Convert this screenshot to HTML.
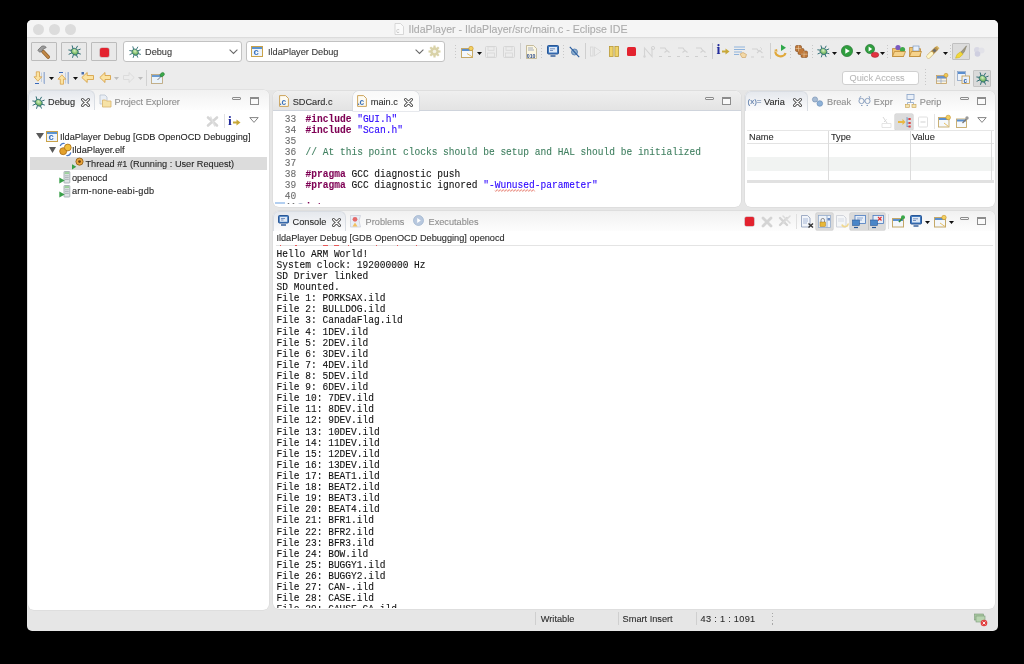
<!DOCTYPE html>
<html><head><meta charset="utf-8">
<style>
*{box-sizing:border-box;margin:0;padding:0}
html,body{width:1024px;height:664px;overflow:hidden;background:#000}
body{position:relative;font-family:"Liberation Sans",sans-serif;font-size:9.2px;color:#222}
#root{position:absolute;left:0;top:0;width:1024px;height:664px;will-change:transform}
.a{position:absolute}
svg{overflow:visible}
</style></head><body><div id="root">

<div class="a" style="left:27px;top:20px;width:970.5px;height:611px;background:#e6e6e6;border-radius:5px"></div>
<div class="a" style="left:27px;top:20px;width:970.5px;height:17px;background:#f5f5f5;border-radius:5px 5px 0 0"></div>
<div class="a" style="left:27px;top:37px;width:970.5px;height:53px;background:linear-gradient(#e3e3e3 0px,#e9e9e9 2px,#ececec 4px,#ececec)"></div>
<div class="a" style="left:27px;top:36.5px;width:970.5px;height:1px;background:#dcdcdc"></div>
<div class="a" style="left:32.5px;top:23.5px;width:11px;height:11px;border-radius:50%;background:#dcdcdc"></div>
<div class="a" style="left:48.5px;top:23.5px;width:11px;height:11px;border-radius:50%;background:#dcdcdc"></div>
<div class="a" style="left:64.5px;top:23.5px;width:11px;height:11px;border-radius:50%;background:#dcdcdc"></div>
<svg class="a" style="left:394px;top:23px" width="10" height="12" viewBox="0 0 10 12"><path d="M1 0.5h5.5l3 3v8H1z" fill="#fbfbfb" stroke="#cfcfcf" stroke-width="0.8"/><text x="2.2" y="9.5" font-size="6.5" font-family="Liberation Sans" fill="#bdbdbd">c</text></svg>
<div class="a" style="left:408.5px;top:24.33px;font-family:'Liberation Sans';font-size:10.6px;line-height:10.6px;color:#ababab;white-space:pre;-webkit-text-stroke:0.1px #ababab;">IldaPlayer - IldaPlayer/src/main.c - Eclipse IDE</div>
<div class="a" style="left:31px;top:42px;width:25.5px;height:18.6px;border:1px solid #bcbcbc;background:#e9e9e9;border-radius:1px"></div>
<div class="a" style="left:61px;top:42px;width:25.5px;height:18.6px;border:1px solid #bcbcbc;background:#e9e9e9;border-radius:1px"></div>
<div class="a" style="left:91px;top:42px;width:25.5px;height:18.6px;border:1px solid #bcbcbc;background:#e9e9e9;border-radius:1px"></div>
<svg class="a" style="left:36.5px;top:44.5px" width="14" height="14" viewBox="0 0 14 14"><path d="M6 6.5L11.2 12" stroke="#8a5a24" stroke-width="3.6" stroke-linecap="round"/><path d="M6 6.5L11.2 12" stroke="#c08848" stroke-width="2.4" stroke-linecap="round"/><path d="M0.8 5.2L4.6 1.3Q6 0.6 7.6 1.2L9.2 2.2L8.4 3.2L6.8 3.4L4.6 6.6L2.6 7.2z" fill="#9c9c9c" stroke="#636363" stroke-width="0.7"/></svg>
<svg class="a" style="left:67.5px;top:44.5px" width="13" height="13" viewBox="0 0 13 13"><defs><radialGradient id="bg67" cx="0.4" cy="0.4" r="0.7"><stop offset="0" stop-color="#d8f0c0"/><stop offset="0.6" stop-color="#7dbb68"/><stop offset="1" stop-color="#3f8a58"/></radialGradient></defs><g stroke="#2d6b72" stroke-width="1" stroke-linecap="round" fill="none"><path d="M5 3.6L4.2 0.8M8.2 3.4L9.4 1.2M3.6 5.4L0.8 5.0M3.6 8.0L1.0 9.2M9.6 5.2L12.2 4.2M9.8 8.2L12.4 9.0M5.4 9.8L4.6 12.4M8.4 9.8L9.4 12.2"/></g><ellipse cx="6.7" cy="6.7" rx="3.7" ry="3.1" transform="rotate(40 6.7 6.7)" fill="url(#bg67)" stroke="#2f6f78" stroke-width="0.8"/></svg>
<div class="a" style="left:100px;top:47.6px;width:9px;height:9px;background:#e3232f;border-radius:2px;box-shadow:0 0 0 0.6px #c7a0a4"></div>
<div class="a" style="left:123px;top:41px;width:118.5px;height:20.5px;border:1px solid #c2c2c2;background:#fff;border-radius:3px"></div>
<svg class="a" style="left:128.5px;top:45.5px" width="12" height="12" viewBox="0 0 13 13"><defs><radialGradient id="bg128" cx="0.4" cy="0.4" r="0.7"><stop offset="0" stop-color="#d8f0c0"/><stop offset="0.6" stop-color="#7dbb68"/><stop offset="1" stop-color="#3f8a58"/></radialGradient></defs><g stroke="#2d6b72" stroke-width="1" stroke-linecap="round" fill="none"><path d="M5 3.6L4.2 0.8M8.2 3.4L9.4 1.2M3.6 5.4L0.8 5.0M3.6 8.0L1.0 9.2M9.6 5.2L12.2 4.2M9.8 8.2L12.4 9.0M5.4 9.8L4.6 12.4M8.4 9.8L9.4 12.2"/></g><ellipse cx="6.7" cy="6.7" rx="3.7" ry="3.1" transform="rotate(40 6.7 6.7)" fill="url(#bg128)" stroke="#2f6f78" stroke-width="0.8"/></svg>
<div class="a" style="left:145px;top:48.31px;font-family:'Liberation Sans';font-size:9.2px;line-height:9.2px;color:#3a3a3a;white-space:pre;-webkit-text-stroke:0.1px #3a3a3a;">Debug</div>
<svg class="a" style="left:229px;top:49px" width="9" height="5" viewBox="0 0 9 5"><path d="M0.6 0.6L4.5 4.4L8.4 0.6" fill="none" stroke="#6a6a6a" stroke-width="1.1"/></svg>
<div class="a" style="left:246px;top:41px;width:198.5px;height:20.5px;border:1px solid #c2c2c2;background:#fff;border-radius:3px"></div>
<svg class="a" style="left:250.5px;top:46px" width="12" height="11" viewBox="0 0 12 11"><rect x="0.5" y="0.5" width="11" height="10" fill="#eef4fb" stroke="#c9a24a"/><rect x="1" y="1" width="10" height="2" fill="#5b93d0"/><text x="2.6" y="9.4" font-size="9.5" font-family="Liberation Sans" font-weight="bold" fill="#3a74c0">c</text></svg>
<div class="a" style="left:268px;top:48.31px;font-family:'Liberation Sans';font-size:9.2px;line-height:9.2px;color:#3a3a3a;white-space:pre;-webkit-text-stroke:0.1px #3a3a3a;">IldaPlayer Debug</div>
<svg class="a" style="left:415px;top:49px" width="9" height="5" viewBox="0 0 9 5"><path d="M0.6 0.6L4.5 4.4L8.4 0.6" fill="none" stroke="#6a6a6a" stroke-width="1.1"/></svg>
<svg class="a" style="left:428px;top:45px" width="13" height="13" viewBox="0 0 13 13"><g fill="#d9d2a8"><circle cx="6.5" cy="6.5" r="4.3"/><g stroke="#d9d2a8" stroke-width="2.2"><line x1="6.5" y1="0.5" x2="6.5" y2="12.5"/><line x1="0.5" y1="6.5" x2="12.5" y2="6.5"/><line x1="2.3" y1="2.3" x2="10.7" y2="10.7"/><line x1="10.7" y1="2.3" x2="2.3" y2="10.7"/></g></g><circle cx="6.5" cy="6.5" r="1.8" fill="#f4f2e6"/></svg>
<div class="a" style="left:455px;top:45px;width:1px;height:14px;background:repeating-linear-gradient(#c8c8c8 0 1px,transparent 1px 3px)"></div>
<svg class="a" style="left:460.5px;top:45.5px" width="13" height="12" viewBox="0 0 13 12"><rect x="0.5" y="2.5" width="11" height="9" fill="#f4f7fb" stroke="#c4a868"/><rect x="1" y="3" width="10" height="2" fill="#5b8fcf"/><path d="M6 7.5L11.5 11" stroke="#e7c063" stroke-width="1"/><circle cx="10" cy="2.5" r="2.2" fill="#f2d060" stroke="#c6902a" stroke-width="0.6"/></svg>
<svg class="a" style="left:476.5px;top:52px" width="5" height="3" viewBox="0 0 5 3"><path d="M0 0h5L2.5 3z" fill="#111"/></svg>
<svg class="a" style="left:485px;top:45.5px" width="12" height="12" viewBox="0 0 12 12"><rect x="0.5" y="0.5" width="11" height="11" rx="1" fill="none" stroke="#d6d6d6"/><rect x="3" y="0.8" width="6" height="3.5" fill="none" stroke="#d6d6d6" stroke-width="0.8"/><rect x="2.5" y="7" width="7" height="4" fill="none" stroke="#d6d6d6" stroke-width="0.8"/></svg>
<svg class="a" style="left:503px;top:45.5px" width="12" height="12" viewBox="0 0 12 12"><rect x="0.5" y="0.5" width="11" height="11" rx="1" fill="none" stroke="#d6d6d6"/><rect x="3" y="0.8" width="6" height="3.5" fill="none" stroke="#d6d6d6" stroke-width="0.8"/><rect x="2.5" y="7" width="7" height="4" fill="none" stroke="#d6d6d6" stroke-width="0.8"/></svg>
<div class="a" style="left:520px;top:43px;width:1px;height:16px;background:#cfcfcf"></div>
<svg class="a" style="left:526px;top:44.5px" width="11" height="14" viewBox="0 0 11 14"><path d="M0.5 0.5h7l3 3v10H0.5z" fill="#fbf6e2" stroke="#b0a47a" stroke-width="0.7"/><path d="M2 3h5M2 5h6" stroke="#7e8cb0" stroke-width="0.7"/><text x="0.8" y="12.6" font-size="5.2" font-family="Liberation Sans" font-weight="bold" fill="#2b4a8a">010</text></svg>
<div class="a" style="left:541px;top:45px;width:1px;height:14px;background:repeating-linear-gradient(#c8c8c8 0 1px,transparent 1px 3px)"></div>
<svg class="a" style="left:547px;top:45px" width="12" height="12" viewBox="0 0 12 12"><rect x="0.5" y="0.5" width="11" height="8.5" rx="1" fill="#3e79bf" stroke="#2a5796"/><rect x="2" y="2" width="8" height="5.5" fill="#dfe9f6"/><path d="M3 3.8h5M3 5.5h3" stroke="#4c6ea8" stroke-width="0.7"/><path d="M3.5 11h5" stroke="#2a5796" stroke-width="1.4"/></svg>
<div class="a" style="left:563px;top:45px;width:1px;height:14px;background:repeating-linear-gradient(#c8c8c8 0 1px,transparent 1px 3px)"></div>
<svg class="a" style="left:568.5px;top:45.5px" width="11" height="12" viewBox="0 0 11 12"><circle cx="5.5" cy="6" r="3" fill="#8fb0cf" stroke="#4a74a8" stroke-width="0.8"/><path d="M0.8 0.8L10.2 11.2" stroke="#2b5ea0" stroke-width="1.2"/></svg>
<div class="a" style="left:585px;top:43px;width:1px;height:16px;background:#cfcfcf"></div>
<svg class="a" style="left:590px;top:46px" width="12" height="11" viewBox="0 0 12 11"><rect x="0.5" y="1" width="2.5" height="9" fill="none" stroke="#d8d8d8" stroke-width="0.9"/><path d="M4.5 1L11 5.5L4.5 10z" fill="none" stroke="#d8d8d8" stroke-width="0.9"/></svg>
<svg class="a" style="left:609px;top:46px" width="10" height="11" viewBox="0 0 10 11"><rect x="0.5" y="0.5" width="3.6" height="10" fill="#efd36a" stroke="#b89a36" stroke-width="0.8"/><rect x="5.9" y="0.5" width="3.6" height="10" fill="#efd36a" stroke="#b89a36" stroke-width="0.8"/></svg>
<div class="a" style="left:626.6px;top:46.5px;width:9.4px;height:9.6px;background:#e3232f;border-radius:1.5px"></div>
<svg class="a" style="left:642.5px;top:45.5px" width="12" height="12" viewBox="0 0 12 12"><path d="M1.5 10.5V2L9 10.5V2" fill="none" stroke="#d4d4d4" stroke-width="1.1"/><circle cx="10" cy="2" r="1.6" fill="none" stroke="#d4d4d4"/><circle cx="1.5" cy="10.5" r="1.2" fill="#d4d4d4"/></svg>
<svg class="a" style="left:659px;top:46px" width="13" height="11" viewBox="0 0 13 11"><path d="M1 2h5l2 3M5.5 6.5L8 4.5l2.5 2" fill="none" stroke="#d2d2d2" stroke-width="1.1"/><path d="M0 10.5h3M9 10.5h3" stroke="#cfcfcf" stroke-width="1"/></svg>
<svg class="a" style="left:677px;top:46px" width="13" height="11" viewBox="0 0 13 11"><path d="M1 2h5l2 3M5.5 6.5L8 4.5l2.5 2" fill="none" stroke="#d2d2d2" stroke-width="1.1"/><path d="M0 10.5h3M9 10.5h3" stroke="#cfcfcf" stroke-width="1"/></svg>
<svg class="a" style="left:695px;top:46px" width="13" height="11" viewBox="0 0 13 11"><path d="M1 2h5l2 3M5.5 6.5L8 4.5l2.5 2" fill="none" stroke="#d2d2d2" stroke-width="1.1"/><path d="M0 10.5h3M9 10.5h3" stroke="#cfcfcf" stroke-width="1"/></svg>
<div class="a" style="left:712px;top:43px;width:1px;height:16px;background:#cfcfcf"></div>
<div class="a" style="left:716.5px;top:42.5px;font-family:'Liberation Serif';font-weight:bold;font-size:14px;line-height:14px;color:#232c9c">i</div>
<svg class="a" style="left:721.5px;top:48px" width="8" height="7" viewBox="0 0 8 7"><path d="M0 3.5h4.5" stroke="#c8a838" stroke-width="2"/><path d="M3.5 0.5L7.5 3.5L3.5 6.5z" fill="#c8a838"/></svg>
<svg class="a" style="left:734px;top:45.5px" width="13" height="12" viewBox="0 0 13 12"><path d="M0 1h11M0 3.5h11M0 6h8M0 8.5h5" stroke="#8fb3dc" stroke-width="1.2"/><path d="M6 8l3-1.5 3.5 2-1 3h-3.5z" fill="#f3d9a8" stroke="#c89a5a" stroke-width="0.6"/></svg>
<svg class="a" style="left:751px;top:45.5px" width="13" height="12" viewBox="0 0 13 12"><path d="M1 3h5l2 3M6 7l2.5-2.5 3 2.5" fill="none" stroke="#d2d2d2" stroke-width="1.1"/><path d="M0 11h3M10 11h3" stroke="#cfcfcf"/><path d="M9 1l2 2-2 2" fill="none" stroke="#d8d8d8" stroke-width="0.9"/></svg>
<div class="a" style="left:769.5px;top:43px;width:1px;height:16px;background:#cfcfcf"></div>
<svg class="a" style="left:774px;top:44px" width="13" height="14" viewBox="0 0 13 14"><path d="M7 0.5v6.5L12 3.7z" fill="#2fa84a"/><path d="M1.5 7.5a5 4 0 0 0 10 1.5" fill="none" stroke="#e0a83a" stroke-width="2.2"/><path d="M0 6l3 -1 0.5 3z" fill="#e0a83a"/></svg>
<div class="a" style="left:790px;top:45px;width:1px;height:14px;background:repeating-linear-gradient(#c8c8c8 0 1px,transparent 1px 3px)"></div>
<svg class="a" style="left:795px;top:44.5px" width="13" height="13" viewBox="0 0 13 13"><g fill="#c07838" stroke="#7e4a1e" stroke-width="0.6"><rect x="0.5" y="0.5" width="6" height="6" rx="1.3"/><rect x="6" y="6" width="6.5" height="6.5" rx="1.3"/><rect x="3" y="3.5" width="6" height="6" rx="1.3"/></g><path d="M3.5 0.5v6M0.5 3.5h6M9 6v6.5M6 9.2h6.5" stroke="#f0d2a8" stroke-width="0.6"/></svg>
<div class="a" style="left:811.5px;top:45px;width:1px;height:14px;background:repeating-linear-gradient(#c8c8c8 0 1px,transparent 1px 3px)"></div>
<svg class="a" style="left:817px;top:45px" width="12.5" height="12.5" viewBox="0 0 13 13"><defs><radialGradient id="bg817" cx="0.4" cy="0.4" r="0.7"><stop offset="0" stop-color="#d8f0c0"/><stop offset="0.6" stop-color="#7dbb68"/><stop offset="1" stop-color="#3f8a58"/></radialGradient></defs><g stroke="#2d6b72" stroke-width="1" stroke-linecap="round" fill="none"><path d="M5 3.6L4.2 0.8M8.2 3.4L9.4 1.2M3.6 5.4L0.8 5.0M3.6 8.0L1.0 9.2M9.6 5.2L12.2 4.2M9.8 8.2L12.4 9.0M5.4 9.8L4.6 12.4M8.4 9.8L9.4 12.2"/></g><ellipse cx="6.7" cy="6.7" rx="3.7" ry="3.1" transform="rotate(40 6.7 6.7)" fill="url(#bg817)" stroke="#2f6f78" stroke-width="0.8"/></svg>
<svg class="a" style="left:832px;top:52px" width="5" height="3" viewBox="0 0 5 3"><path d="M0 0h5L2.5 3z" fill="#111"/></svg>
<svg class="a" style="left:841px;top:45px" width="12" height="12" viewBox="0 0 12 12"><circle cx="6" cy="6" r="5.6" fill="#2f9e3e" stroke="#1d6b2a" stroke-width="0.6"/><path d="M4.3 3.2L8.8 6L4.3 8.8z" fill="#fff"/></svg>
<svg class="a" style="left:855.5px;top:52px" width="5" height="3" viewBox="0 0 5 3"><path d="M0 0h5L2.5 3z" fill="#111"/></svg>
<svg class="a" style="left:864.5px;top:44px" width="14" height="14" viewBox="0 0 14 14"><circle cx="5" cy="5" r="4.6" fill="#2f9e3e" stroke="#1d6b2a" stroke-width="0.6"/><path d="M3.6 2.6L7.2 5L3.6 7.4z" fill="#fff"/><ellipse cx="10" cy="10.8" rx="3.8" ry="2.6" fill="#e23240" stroke="#a21a24" stroke-width="0.5"/></svg>
<svg class="a" style="left:879.5px;top:52px" width="5" height="3" viewBox="0 0 5 3"><path d="M0 0h5L2.5 3z" fill="#111"/></svg>
<div class="a" style="left:887px;top:45px;width:1px;height:14px;background:repeating-linear-gradient(#c8c8c8 0 1px,transparent 1px 3px)"></div>
<svg class="a" style="left:891.5px;top:44px" width="14" height="13" viewBox="0 0 14 13"><path d="M0.5 4.5h4l1 1.2h6v6.8H0.5z" fill="#f0c470" stroke="#b7832e" stroke-width="0.7"/><circle cx="6" cy="3.5" r="2.6" fill="#7a5bc0"/><circle cx="10.5" cy="5.5" r="2.6" fill="#3fa84a"/><path d="M0.5 12.5l2-5h11l-2 5z" fill="#f6d38c" stroke="#b7832e" stroke-width="0.7"/></svg>
<svg class="a" style="left:909px;top:45px" width="13" height="12" viewBox="0 0 13 12"><path d="M0.5 2.5h4l1 1.2h6v7.8H0.5z" fill="#f0c470" stroke="#b7832e" stroke-width="0.7"/><rect x="4" y="1" width="6" height="5" fill="#e8f0fa" stroke="#6a8ab8" stroke-width="0.6"/><path d="M0.5 11.5l2-5h10l-2 5z" fill="#f6d38c" stroke="#b7832e" stroke-width="0.7"/></svg>
<svg class="a" style="left:927px;top:45px" width="13" height="13" viewBox="0 0 13 13"><path d="M1.5 11.5L9.5 3.5" stroke="#b8924a" stroke-width="4" stroke-linecap="round"/><path d="M1.5 11.5L4.5 8.5" stroke="#fff7c8" stroke-width="3.4" stroke-linecap="round"/><path d="M6.5 6.5l2-2" stroke="#6b6b6b" stroke-width="3"/><path d="M9.5 1.2l2.5 2.5" stroke="#d8b868" stroke-width="1.5"/></svg>
<svg class="a" style="left:942.5px;top:52px" width="5" height="3" viewBox="0 0 5 3"><path d="M0 0h5L2.5 3z" fill="#111"/></svg>
<div class="a" style="left:949.5px;top:45px;width:1px;height:14px;background:repeating-linear-gradient(#c8c8c8 0 1px,transparent 1px 3px)"></div>
<div class="a" style="left:952px;top:43px;width:18px;height:16.5px;border:1px solid #c0c0c0;background:#dcdcdc;border-radius:1px"></div>
<svg class="a" style="left:954px;top:44.5px" width="14" height="14" viewBox="0 0 14 14"><path d="M6.5 7.5L12.5 0.8L10.5 6.5L8.5 9z" fill="#a09a80" stroke="#7a7460" stroke-width="0.5"/><path d="M1.5 13.2L3 9.5L6.5 6.8L9 9.3L5.5 12.5z" fill="#f2d838" stroke="#c8aa18" stroke-width="0.5"/></svg>
<svg class="a" style="left:973px;top:46px" width="12" height="11" viewBox="0 0 12 11"><circle cx="4" cy="4" r="3" fill="#d8d8e4"/><circle cx="8.5" cy="4.5" r="3" fill="#e2e2e8"/><circle cx="4.5" cy="8" r="2.8" fill="#cfcfe0"/></svg>
<svg class="a" style="left:33.5px;top:71px" width="13" height="14" viewBox="0 0 13 14"><path d="M7.5 1.5v9.5M9.5 1v11.5" stroke="#b8c8e0" stroke-width="0.8"/><path d="M10.5 1v12" stroke="#9aaed0" stroke-width="0.9"/><path d="M2.3 0.8h3.2v5h2.3L3.9 10.2L0 5.8h2.3z" fill="#fbe3a2" stroke="#d49a3a" stroke-width="0.7"/><path d="M1 12.5h4" stroke="#3a6ab8" stroke-width="1"/></svg>
<svg class="a" style="left:48.5px;top:76.8px" width="5" height="3" viewBox="0 0 5 3"><path d="M0 0h5L2.5 3z" fill="#111"/></svg>
<svg class="a" style="left:58px;top:70.5px" width="12" height="14" viewBox="0 0 12 14"><path d="M7.5 1.5v11M9.5 1v11.5" stroke="#b8c8e0" stroke-width="0.8"/><path d="M10.5 1v12" stroke="#9aaed0" stroke-width="0.9"/><path d="M2.3 13.2h3.2v-5h2.3L3.9 3.8L0 8.2h2.3z" fill="#fbe3a2" stroke="#d49a3a" stroke-width="0.7"/><path d="M1 1.5h4" stroke="#3a6ab8" stroke-width="1"/></svg>
<svg class="a" style="left:72.5px;top:76.8px" width="5" height="3" viewBox="0 0 5 3"><path d="M0 0h5L2.5 3z" fill="#111"/></svg>
<svg class="a" style="left:81px;top:72px" width="13" height="11" viewBox="0 0 13 11"><path d="M12.5 3.5h-6.3v-3L0.8 5.5l5.4 5v-3h6.3z" fill="#fbe3a2" stroke="#d49a3a" stroke-width="0.8"/><rect x="0.5" y="0" width="2.5" height="2.5" fill="#4a6fb0"/></svg>
<svg class="a" style="left:99px;top:72px" width="12" height="11" viewBox="0 0 12 11"><path d="M11.5 3.5h-5.5v-3L0.8 5.5l5.2 5v-3h5.5z" fill="#fbe3a2" stroke="#d49a3a" stroke-width="0.8"/></svg>
<svg class="a" style="left:113.5px;top:76.8px" width="5" height="3" viewBox="0 0 5 3"><path d="M0 0h5L2.5 3z" fill="#bdbdbd"/></svg>
<svg class="a" style="left:123px;top:72px" width="12" height="11" viewBox="0 0 12 11"><path d="M0.5 3.5h5.5v-3l5.2 5-5.2 5v-3H0.5z" fill="none" stroke="#dadada" stroke-width="0.9"/></svg>
<svg class="a" style="left:137.5px;top:76.8px" width="5" height="3" viewBox="0 0 5 3"><path d="M0 0h5L2.5 3z" fill="#bdbdbd"/></svg>
<div class="a" style="left:146px;top:70px;width:1px;height:16px;background:#d2d2d2"></div>
<svg class="a" style="left:150.5px;top:72px" width="14" height="12" viewBox="0 0 14 12"><rect x="0.5" y="2.5" width="11" height="9" fill="#eaf3fb" stroke="#b8a070" stroke-width="0.8"/><rect x="1" y="3" width="10" height="2" fill="#6a9ad0"/><path d="M6.5 8L10.5 4" stroke="#555" stroke-width="0.8"/><ellipse cx="11.2" cy="2.6" rx="2.4" ry="1.8" transform="rotate(-40 11.2 2.6)" fill="#3aa84a" stroke="#257a30" stroke-width="0.5"/></svg>
<div class="a" style="left:841.5px;top:70.5px;width:77px;height:14px;border:1px solid #d0d0d0;background:#fff;border-radius:3px"></div>
<div class="a" style="left:849.5px;top:74.01px;font-family:'Liberation Sans';font-size:9.2px;line-height:9.2px;color:#b9b9b9;white-space:pre;-webkit-text-stroke:0.1px #b9b9b9;">Quick Access</div>
<div class="a" style="left:925px;top:69px;width:1px;height:16px;background:repeating-linear-gradient(#c8c8c8 0 1px,transparent 1px 3px)"></div>
<svg class="a" style="left:936px;top:72.5px" width="12" height="11" viewBox="0 0 12 11"><rect x="0.5" y="2.5" width="10" height="8" fill="#fbf3de" stroke="#c4a060" stroke-width="0.8"/><path d="M0.5 5.5h10M5 2.5v8M0.5 8h10" stroke="#8aa0c8" stroke-width="0.7"/><rect x="1" y="3" width="9" height="2" fill="#6a92c8"/><circle cx="10" cy="2.3" r="2" fill="#f0c850" stroke="#b8862a" stroke-width="0.5"/></svg>
<div class="a" style="left:953.5px;top:70px;width:1px;height:16px;background:#d2d2d2"></div>
<svg class="a" style="left:957px;top:71px" width="13" height="13" viewBox="0 0 13 13"><rect x="0.5" y="0.5" width="8" height="9" fill="#eef3fa" stroke="#8aa4c8" stroke-width="0.8"/><rect x="1" y="1" width="7" height="2" fill="#5b8fcf"/><rect x="5" y="5" width="7.5" height="7.5" fill="#e9f0f9" stroke="#c49a4a" stroke-width="0.8"/><text x="6.5" y="11.6" font-size="6.5" font-family="Liberation Sans" font-weight="bold" fill="#2f5fa8">c</text></svg>
<div class="a" style="left:973px;top:70px;width:18px;height:17px;border:1px solid #c4c4c4;background:#dadada;border-radius:1px"></div>
<svg class="a" style="left:975.5px;top:72px" width="13" height="13" viewBox="0 0 13 13"><defs><radialGradient id="bg975" cx="0.4" cy="0.4" r="0.7"><stop offset="0" stop-color="#d8f0c0"/><stop offset="0.6" stop-color="#7dbb68"/><stop offset="1" stop-color="#3f8a58"/></radialGradient></defs><g stroke="#2d6b72" stroke-width="1" stroke-linecap="round" fill="none"><path d="M5 3.6L4.2 0.8M8.2 3.4L9.4 1.2M3.6 5.4L0.8 5.0M3.6 8.0L1.0 9.2M9.6 5.2L12.2 4.2M9.8 8.2L12.4 9.0M5.4 9.8L4.6 12.4M8.4 9.8L9.4 12.2"/></g><ellipse cx="6.7" cy="6.7" rx="3.7" ry="3.1" transform="rotate(40 6.7 6.7)" fill="url(#bg975)" stroke="#2f6f78" stroke-width="0.8"/></svg>
<div class="a" style="left:28px;top:90px;width:241px;height:519.5px;background:#fff;border-radius:6px;box-shadow:0 0 0 0.5px #d6d6d6"></div>
<div class="a" style="left:272.5px;top:90.5px;width:468px;height:116.5px;background:#fff;border-radius:6px;box-shadow:0 0 0 0.5px #d6d6d6"></div>
<div class="a" style="left:744.5px;top:90.5px;width:250.5px;height:116.5px;background:#fff;border-radius:6px;box-shadow:0 0 0 0.5px #d6d6d6"></div>
<div class="a" style="left:272.5px;top:210.5px;width:722.5px;height:398.5px;background:#fff;border-radius:6px;box-shadow:0 0 0 0.5px #d6d6d6"></div>
<div class="a" style="left:28px;top:90px;width:241px;height:20px;background:linear-gradient(#f1f1f1,#fdfdfd);border-radius:6px 6px 0 0"></div>
<div class="a" style="left:28px;top:90px;width:67px;height:20px;background:linear-gradient(#e5e8ed,#fcfcfd);border-radius:6px 6px 0 0;border:0.6px solid #d9dde3;border-bottom:none"></div>
<svg class="a" style="left:32px;top:95.5px" width="13" height="13" viewBox="0 0 13 13"><defs><radialGradient id="bg32" cx="0.4" cy="0.4" r="0.7"><stop offset="0" stop-color="#d8f0c0"/><stop offset="0.6" stop-color="#7dbb68"/><stop offset="1" stop-color="#3f8a58"/></radialGradient></defs><g stroke="#2d6b72" stroke-width="1" stroke-linecap="round" fill="none"><path d="M5 3.6L4.2 0.8M8.2 3.4L9.4 1.2M3.6 5.4L0.8 5.0M3.6 8.0L1.0 9.2M9.6 5.2L12.2 4.2M9.8 8.2L12.4 9.0M5.4 9.8L4.6 12.4M8.4 9.8L9.4 12.2"/></g><ellipse cx="6.7" cy="6.7" rx="3.7" ry="3.1" transform="rotate(40 6.7 6.7)" fill="url(#bg32)" stroke="#2f6f78" stroke-width="0.8"/></svg>
<div class="a" style="left:48px;top:98.01px;font-family:'Liberation Sans';font-size:9.2px;line-height:9.2px;color:#2b2b2b;white-space:pre;-webkit-text-stroke:0.1px #2b2b2b;">Debug</div>
<svg class="a" style="left:80.5px;top:97.5px" width="9" height="9" viewBox="0 0 9 9"><path d="M1.5 1.5L7.5 7.5M7.5 1.5L1.5 7.5" stroke="#3c3c3c" stroke-width="3" stroke-linecap="round"/><path d="M1.5 1.5L7.5 7.5M7.5 1.5L1.5 7.5" stroke="#fafafa" stroke-width="1.3" stroke-linecap="round"/></svg>
<svg class="a" style="left:98.5px;top:94px" width="13" height="14" viewBox="0 0 13 14"><path d="M1 1h5l2 2v7H1z" fill="#e9eef5" stroke="#b9c3cf" stroke-width="0.8"/><path d="M3.5 6h3l1 1h4.5v6h-8.5z" fill="#f6e2a6" stroke="#d8b36a" stroke-width="0.8"/></svg>
<div class="a" style="left:114.5px;top:98.01px;font-family:'Liberation Sans';font-size:9.2px;line-height:9.2px;color:#8e8e8e;white-space:pre;-webkit-text-stroke:0.1px #8e8e8e;">Project Explorer</div>
<div class="a" style="left:232px;top:96.5px;width:9px;height:3.5px;border:1px solid #8c8c8c;border-radius:1px;background:#f4f4f4"></div>
<div class="a" style="left:250px;top:96.5px;width:9px;height:8.5px;border:1px solid #8c8c8c;border-top:2px solid #8c8c8c;background:#fafafa"></div>
<svg class="a" style="left:206px;top:116px" width="13" height="11" viewBox="0 0 13 11"><path d="M2 1.5L11 9.5M11 1.5L2 9.5" stroke="#d6d6d6" stroke-width="2.6" stroke-linecap="round"/><path d="M4.5 0.5L9 10.5" stroke="#e0e0e0" stroke-width="1.4"/></svg>
<div class="a" style="left:223.5px;top:114px;width:1px;height:14px;background:#e2e2e2"></div>
<div class="a" style="left:228px;top:114px;font-family:'Liberation Serif';font-weight:bold;font-size:13.5px;line-height:13.5px;color:#232c9c">i</div>
<svg class="a" style="left:233px;top:119px" width="8" height="7" viewBox="0 0 8 7"><path d="M0 3.5h4.5" stroke="#c8a838" stroke-width="2"/><path d="M3.5 0.5L7.5 3.5L3.5 6.5z" fill="#c8a838"/></svg>
<svg class="a" style="left:249px;top:117px" width="10" height="6" viewBox="0 0 10 6"><path d="M0.8 0.6h8.4L5 5.4z" fill="#fff" stroke="#777" stroke-width="0.9"/></svg>
<div class="a" style="left:30px;top:157.3px;width:237px;height:12.5px;background:#dcdcdc"></div>
<svg class="a" style="left:36px;top:133px" width="8" height="6" viewBox="0 0 8 6"><path d="M0 0h8L4 6z" fill="#5a5a5a"/></svg>
<svg class="a" style="left:46px;top:130.5px" width="12" height="11" viewBox="0 0 12 11"><rect x="0.5" y="0.5" width="11" height="10" fill="#eef4fb" stroke="#c9a24a"/><rect x="1" y="1" width="10" height="2" fill="#5b93d0"/><text x="2.6" y="9.4" font-size="9.5" font-family="Liberation Sans" font-weight="bold" fill="#3a74c0">c</text></svg>
<div class="a" style="left:60px;top:132.71px;font-family:'Liberation Sans';font-size:9.2px;line-height:9.2px;color:#262626;white-space:pre;-webkit-text-stroke:0.1px #262626;">IldaPlayer Debug [GDB OpenOCD Debugging]</div>
<svg class="a" style="left:49px;top:146.5px" width="7" height="6" viewBox="0 0 7 6"><path d="M0 0h7L3.5 6z" fill="#5a5a5a"/></svg>
<svg class="a" style="left:58.5px;top:143px" width="13" height="13" viewBox="0 0 13 13"><circle cx="4.2" cy="8.2" r="3.5" fill="#e3a12c" stroke="#a96c16" stroke-width="0.8"/><circle cx="8.8" cy="4.5" r="3.4" fill="#f1bf3e" stroke="#a96c16" stroke-width="0.8"/><path d="M1.2 3a4 4 0 0 1 4.5-2.5M11.8 9.5a4 4 0 0 1-4.5 3" stroke="#4a7ac8" stroke-width="1.2" fill="none"/></svg>
<div class="a" style="left:72px;top:146.21px;font-family:'Liberation Sans';font-size:9.2px;line-height:9.2px;color:#262626;white-space:pre;-webkit-text-stroke:0.1px #262626;">IldaPlayer.elf</div>
<svg class="a" style="left:71px;top:157px" width="14" height="13" viewBox="0 0 14 13"><circle cx="8.5" cy="4.6" r="3.6" fill="#e9a43c" stroke="#94621a" stroke-width="0.9"/><circle cx="8.5" cy="4.6" r="1.4" fill="#6e4210"/><path d="M1 7.2l4.3 2.6L1 12.4z" fill="#38a048"/></svg>
<div class="a" style="left:85.5px;top:160.01px;font-family:'Liberation Sans';font-size:9.2px;line-height:9.2px;color:#262626;white-space:pre;-webkit-text-stroke:0.1px #262626;">Thread #1 (Running : User Request)</div>
<svg class="a" style="left:58.5px;top:171px" width="13" height="13" viewBox="0 0 13 13"><rect x="5" y="0.5" width="5.8" height="11.5" rx="0.6" fill="#dfe3e6" stroke="#98a4a8" stroke-width="0.8"/><rect x="5.6" y="1.1" width="4.6" height="2" fill="#9ccf9c"/><path d="M6 4.8h3.8M6 6.6h3.8M6 8.4h3.8" stroke="#8a969a" stroke-width="0.6"/><path d="M0.3 6.6l5.4 3L0.3 12.6z" fill="#3aa04a"/></svg>
<div class="a" style="left:72px;top:173.51px;font-family:'Liberation Sans';font-size:9.2px;line-height:9.2px;color:#262626;white-space:pre;-webkit-text-stroke:0.1px #262626;">openocd</div>
<svg class="a" style="left:58.5px;top:184.5px" width="13" height="13" viewBox="0 0 13 13"><rect x="5" y="0.5" width="5.8" height="11.5" rx="0.6" fill="#dfe3e6" stroke="#98a4a8" stroke-width="0.8"/><rect x="5.6" y="1.1" width="4.6" height="2" fill="#9ccf9c"/><path d="M6 4.8h3.8M6 6.6h3.8M6 8.4h3.8" stroke="#8a969a" stroke-width="0.6"/><path d="M0.3 6.6l5.4 3L0.3 12.6z" fill="#3aa04a"/></svg>
<div class="a" style="left:72px;top:187.01px;font-family:'Liberation Sans';font-size:9.2px;line-height:9.2px;color:#262626;white-space:pre;-webkit-text-stroke:0.1px #262626;letter-spacing:0.25px;">arm-none-eabi-gdb</div>
<div class="a" style="left:272.5px;top:90.5px;width:468px;height:20px;background:linear-gradient(#efefef,#e3e3e3);border-radius:6px 6px 0 0"></div>
<div class="a" style="left:272.5px;top:110px;width:468px;height:1px;background:#cfd4dc"></div>
<div class="a" style="left:352.5px;top:91px;width:66px;height:20px;background:linear-gradient(#f9f9f9,#ffffff);border-radius:6px 6px 0 0;box-shadow:0 0 0 0.6px #cfd4dc"></div>
<svg class="a" style="left:278.5px;top:94.5px" width="10" height="12" viewBox="0 0 10 12"><g opacity="1"><path d="M0.6 0.6h6l2.8 2.8v8H0.6z" fill="#fdfbf3" stroke="#c79a4a" stroke-width="0.9"/><text x="2.4" y="10" font-size="8.4" font-weight="bold" font-family="Liberation Sans" fill="#3d72ba">c</text><rect x="0.9" y="8.6" width="1.3" height="1.3" fill="#3d72ba"/></g></svg>
<div class="a" style="left:292.7px;top:98.01px;font-family:'Liberation Sans';font-size:9.2px;line-height:9.2px;color:#2f2f2f;white-space:pre;-webkit-text-stroke:0.1px #2f2f2f;">SDCard.c</div>
<svg class="a" style="left:356.7px;top:95px" width="10" height="12" viewBox="0 0 10 12"><g opacity="1"><path d="M0.6 0.6h6l2.8 2.8v8H0.6z" fill="#fdfbf3" stroke="#c79a4a" stroke-width="0.9"/><text x="2.4" y="10" font-size="8.4" font-weight="bold" font-family="Liberation Sans" fill="#3d72ba">c</text><rect x="0.9" y="8.6" width="1.3" height="1.3" fill="#3d72ba"/></g></svg>
<div class="a" style="left:370.8px;top:98.21px;font-family:'Liberation Sans';font-size:9.2px;line-height:9.2px;color:#2f2f2f;white-space:pre;-webkit-text-stroke:0.1px #2f2f2f;">main.c</div>
<svg class="a" style="left:403.5px;top:98px" width="9" height="9" viewBox="0 0 9 9"><path d="M1.5 1.5L7.5 7.5M7.5 1.5L1.5 7.5" stroke="#3c3c3c" stroke-width="3" stroke-linecap="round"/><path d="M1.5 1.5L7.5 7.5M7.5 1.5L1.5 7.5" stroke="#fafafa" stroke-width="1.3" stroke-linecap="round"/></svg>
<div class="a" style="left:704.5px;top:96.5px;width:9px;height:3.5px;border:1px solid #8c8c8c;border-radius:1px;background:#f4f4f4"></div>
<div class="a" style="left:722px;top:96.5px;width:9px;height:8.5px;border:1px solid #8c8c8c;border-top:2px solid #8c8c8c;background:#fafafa"></div>
<div class="a" style="left:272.5px;top:111px;width:468px;height:93px;overflow:hidden">
<div class="a" style="left:-272.5px;top:-111px;width:1024px;height:664px">
<div class="a" style="left:284.8px;top:114.78px;font-family:'Liberation Mono';font-size:9.55px;line-height:9.55px;color:#6e6e6e;white-space:pre;transform:scaleY(1.1);transform-origin:0 7.32px;-webkit-text-stroke:0.1px #6e6e6e;">33</div>
<div class="a" style="left:305.6px;top:114.78px;font-family:'Liberation Mono';font-size:9.55px;line-height:9.55px;color:#7f0055;white-space:pre;transform:scaleY(1.1);transform-origin:0 7.32px;-webkit-text-stroke:0.1px #7f0055;font-weight:bold;">#include</div>
<div class="a" style="left:351.44px;top:114.78px;font-family:'Liberation Mono';font-size:9.55px;line-height:9.55px;color:#111;white-space:pre;transform:scaleY(1.1);transform-origin:0 7.32px;-webkit-text-stroke:0.1px #111;"> </div>
<div class="a" style="left:357.17px;top:114.78px;font-family:'Liberation Mono';font-size:9.55px;line-height:9.55px;color:#2a00ff;white-space:pre;transform:scaleY(1.1);transform-origin:0 7.32px;-webkit-text-stroke:0.1px #2a00ff;">"GUI.h"</div>
<div class="a" style="left:284.8px;top:125.84px;font-family:'Liberation Mono';font-size:9.55px;line-height:9.55px;color:#6e6e6e;white-space:pre;transform:scaleY(1.1);transform-origin:0 7.32px;-webkit-text-stroke:0.1px #6e6e6e;">34</div>
<div class="a" style="left:305.6px;top:125.84px;font-family:'Liberation Mono';font-size:9.55px;line-height:9.55px;color:#7f0055;white-space:pre;transform:scaleY(1.1);transform-origin:0 7.32px;-webkit-text-stroke:0.1px #7f0055;font-weight:bold;">#include</div>
<div class="a" style="left:351.44px;top:125.84px;font-family:'Liberation Mono';font-size:9.55px;line-height:9.55px;color:#111;white-space:pre;transform:scaleY(1.1);transform-origin:0 7.32px;-webkit-text-stroke:0.1px #111;"> </div>
<div class="a" style="left:357.17px;top:125.84px;font-family:'Liberation Mono';font-size:9.55px;line-height:9.55px;color:#2a00ff;white-space:pre;transform:scaleY(1.1);transform-origin:0 7.32px;-webkit-text-stroke:0.1px #2a00ff;">"Scan.h"</div>
<div class="a" style="left:284.8px;top:136.90px;font-family:'Liberation Mono';font-size:9.55px;line-height:9.55px;color:#6e6e6e;white-space:pre;transform:scaleY(1.1);transform-origin:0 7.32px;-webkit-text-stroke:0.1px #6e6e6e;">35</div>
<div class="a" style="left:284.8px;top:147.96px;font-family:'Liberation Mono';font-size:9.55px;line-height:9.55px;color:#6e6e6e;white-space:pre;transform:scaleY(1.1);transform-origin:0 7.32px;-webkit-text-stroke:0.1px #6e6e6e;">36</div>
<div class="a" style="left:305.6px;top:147.96px;font-family:'Liberation Mono';font-size:9.55px;line-height:9.55px;color:#3f7f5f;white-space:pre;transform:scaleY(1.1);transform-origin:0 7.32px;-webkit-text-stroke:0.1px #3f7f5f;">// At this point clocks should be setup and HAL should be initialized</div>
<div class="a" style="left:284.8px;top:159.02px;font-family:'Liberation Mono';font-size:9.55px;line-height:9.55px;color:#6e6e6e;white-space:pre;transform:scaleY(1.1);transform-origin:0 7.32px;-webkit-text-stroke:0.1px #6e6e6e;">37</div>
<div class="a" style="left:284.8px;top:170.08px;font-family:'Liberation Mono';font-size:9.55px;line-height:9.55px;color:#6e6e6e;white-space:pre;transform:scaleY(1.1);transform-origin:0 7.32px;-webkit-text-stroke:0.1px #6e6e6e;">38</div>
<div class="a" style="left:305.6px;top:170.08px;font-family:'Liberation Mono';font-size:9.55px;line-height:9.55px;color:#7f0055;white-space:pre;transform:scaleY(1.1);transform-origin:0 7.32px;-webkit-text-stroke:0.1px #7f0055;font-weight:bold;">#pragma</div>
<div class="a" style="left:345.71px;top:170.08px;font-family:'Liberation Mono';font-size:9.55px;line-height:9.55px;color:#111;white-space:pre;transform:scaleY(1.1);transform-origin:0 7.32px;-webkit-text-stroke:0.1px #111;"> GCC diagnostic push</div>
<div class="a" style="left:284.8px;top:181.14px;font-family:'Liberation Mono';font-size:9.55px;line-height:9.55px;color:#6e6e6e;white-space:pre;transform:scaleY(1.1);transform-origin:0 7.32px;-webkit-text-stroke:0.1px #6e6e6e;">39</div>
<div class="a" style="left:305.6px;top:181.14px;font-family:'Liberation Mono';font-size:9.55px;line-height:9.55px;color:#7f0055;white-space:pre;transform:scaleY(1.1);transform-origin:0 7.32px;-webkit-text-stroke:0.1px #7f0055;font-weight:bold;">#pragma</div>
<div class="a" style="left:345.71px;top:181.14px;font-family:'Liberation Mono';font-size:9.55px;line-height:9.55px;color:#111;white-space:pre;transform:scaleY(1.1);transform-origin:0 7.32px;-webkit-text-stroke:0.1px #111;"> GCC diagnostic ignored </div>
<div class="a" style="left:483.23px;top:181.14px;font-family:'Liberation Mono';font-size:9.55px;line-height:9.55px;color:#2a00ff;white-space:pre;transform:scaleY(1.1);transform-origin:0 7.32px;-webkit-text-stroke:0.1px #2a00ff;">"-Wunused-parameter"</div>
<div class="a" style="left:284.8px;top:192.20px;font-family:'Liberation Mono';font-size:9.55px;line-height:9.55px;color:#6e6e6e;white-space:pre;transform:scaleY(1.1);transform-origin:0 7.32px;-webkit-text-stroke:0.1px #6e6e6e;">40</div>
<div class="a" style="left:284.8px;top:203.26px;font-family:'Liberation Mono';font-size:9.55px;line-height:9.55px;color:#6e6e6e;white-space:pre;transform:scaleY(1.1);transform-origin:0 7.32px;-webkit-text-stroke:0.1px #6e6e6e;">41</div>
<div class="a" style="left:305.6px;top:203.26px;font-family:'Liberation Mono';font-size:9.55px;line-height:9.55px;color:#7f0055;white-space:pre;transform:scaleY(1.1);transform-origin:0 7.32px;-webkit-text-stroke:0.1px #7f0055;font-weight:bold;">int</div>
<div class="a" style="left:275px;top:201.8px;width:9.5px;height:3.5px;background:#b3cff0"></div>
<svg class="a" style="left:297px;top:202.5px" width="7" height="7" viewBox="0 0 7 7"><circle cx="3.5" cy="3.5" r="3" fill="#fff" stroke="#8a9ab8" stroke-width="0.8"/></svg>
</div></div>
<svg class="a" style="left:494.7px;top:188.5px" width="40.11" height="3" viewBox="0 0 40.11 3"><path d="M0 1.5 L0.75 2.5 L2.25 0.5 L3.75 2.5 L5.25 0.5 L6.75 2.5 L8.25 0.5 L9.75 2.5 L11.25 0.5 L12.75 2.5 L14.25 0.5 L15.75 2.5 L17.25 0.5 L18.75 2.5 L20.25 0.5 L21.75 2.5 L23.25 0.5 L24.75 2.5 L26.25 0.5 L27.75 2.5 L29.25 0.5 L30.75 2.5 L32.25 0.5 L33.75 2.5 L35.25 0.5 L36.75 2.5 L38.25 0.5 L39.75 2.5" fill="none" stroke="#e26a5a" stroke-width="0.7"/></svg>
<div class="a" style="left:744.5px;top:90.5px;width:250.5px;height:20px;background:linear-gradient(#f1f1f1,#fdfdfd);border-radius:6px 6px 0 0"></div>
<div class="a" style="left:744.5px;top:90.5px;width:63px;height:20px;background:linear-gradient(#e5e8ed,#fcfcfd);border-radius:6px 6px 0 0;border:0.6px solid #d9dde3;border-bottom:none"></div>
<div class="a" style="left:747.5px;top:98.03px;font-family:'Liberation Sans';font-size:8px;line-height:8px;color:#5a7aa8;white-space:pre;-webkit-text-stroke:0.1px #5a7aa8;">(x)=</div>
<div class="a" style="left:764px;top:98.01px;font-family:'Liberation Sans';font-size:9.2px;line-height:9.2px;color:#2b2b2b;white-space:pre;-webkit-text-stroke:0.1px #2b2b2b;">Varia</div>
<svg class="a" style="left:793px;top:97.5px" width="9" height="9" viewBox="0 0 9 9"><path d="M1.5 1.5L7.5 7.5M7.5 1.5L1.5 7.5" stroke="#3c3c3c" stroke-width="3" stroke-linecap="round"/><path d="M1.5 1.5L7.5 7.5M7.5 1.5L1.5 7.5" stroke="#fafafa" stroke-width="1.3" stroke-linecap="round"/></svg>
<svg class="a" style="left:812px;top:96px" width="11" height="11" viewBox="0 0 11 11"><circle cx="3" cy="3.5" r="2.6" fill="#a8bcd4" stroke="#6f8cb0" stroke-width="0.6"/><circle cx="7.8" cy="7.5" r="2.8" fill="#8fb2d8" stroke="#5f84b0" stroke-width="0.6"/></svg>
<div class="a" style="left:827px;top:98.01px;font-family:'Liberation Sans';font-size:9.2px;line-height:9.2px;color:#8e8e8e;white-space:pre;-webkit-text-stroke:0.1px #8e8e8e;">Break</div>
<svg class="a" style="left:858px;top:95px" width="14" height="12" viewBox="0 0 14 12"><circle cx="3.5" cy="6" r="2.6" fill="none" stroke="#8aa0c0" stroke-width="1"/><circle cx="9.5" cy="6" r="2.6" fill="none" stroke="#8aa0c0" stroke-width="1"/><path d="M6 6h1M1 4l2-3M12 4l-1-3" stroke="#8aa0c0" stroke-width="0.9"/><path d="M3 10.5h1.5M8.5 10.5H10" stroke="#8aa0c0"/></svg>
<div class="a" style="left:873.8px;top:98.01px;font-family:'Liberation Sans';font-size:9.2px;line-height:9.2px;color:#8e8e8e;white-space:pre;-webkit-text-stroke:0.1px #8e8e8e;">Expr</div>
<svg class="a" style="left:904.5px;top:94px" width="12" height="14" viewBox="0 0 12 14"><rect x="2" y="0.5" width="7" height="5" fill="#eaf0f8" stroke="#8aa4c8" stroke-width="0.8"/><path d="M5.5 5.5v3M2.5 8.5h6M2.5 8.5v2M8.5 8.5v2" stroke="#8aa4c8" stroke-width="0.8"/><rect x="0.5" y="10.5" width="4" height="3" fill="#f4e4b0" stroke="#c8a050" stroke-width="0.6"/><rect x="7" y="10.5" width="4" height="3" fill="#f4e4b0" stroke="#c8a050" stroke-width="0.6"/></svg>
<div class="a" style="left:919.8px;top:98.01px;font-family:'Liberation Sans';font-size:9.2px;line-height:9.2px;color:#8e8e8e;white-space:pre;-webkit-text-stroke:0.1px #8e8e8e;">Perip</div>
<div class="a" style="left:959.5px;top:96.5px;width:9px;height:3.5px;border:1px solid #8c8c8c;border-radius:1px;background:#f4f4f4"></div>
<div class="a" style="left:977px;top:96.5px;width:9px;height:8.5px;border:1px solid #8c8c8c;border-top:2px solid #8c8c8c;background:#fafafa"></div>
<svg class="a" style="left:881px;top:115.5px" width="12" height="12" viewBox="0 0 12 12"><path d="M1 7.5h9v4H1z" fill="none" stroke="#dedede" stroke-width="0.8"/><path d="M2 1l4 6M5.5 3.5L3 6" stroke="#d8d8d8" stroke-width="1"/></svg>
<div class="a" style="left:895.4px;top:114px;width:17.3px;height:16px;background:#dcdcdc;border-radius:1px;box-shadow:0 0 0 0.5px #c8c8c8"></div>
<svg class="a" style="left:897.5px;top:116px" width="13" height="12" viewBox="0 0 13 12"><path d="M0 6h5" stroke="#e8b840" stroke-width="2"/><path d="M4.5 3l3 3-3 3z" fill="#e8b840"/><path d="M9 1v10M9 3h3M9 7h3M9 10.5h3" stroke="#6b8fc0" stroke-width="0.8"/><rect x="10.5" y="2" width="2.2" height="2" fill="#e04040"/><rect x="10.5" y="6" width="2.2" height="2" fill="#e04040"/><rect x="10.5" y="9.5" width="2.2" height="2" fill="#e04040"/></svg>
<svg class="a" style="left:917.8px;top:115.5px" width="10" height="12" viewBox="0 0 10 12"><rect x="0.5" y="1" width="9" height="10" rx="1" fill="none" stroke="#e0e0e0"/><path d="M2.5 6h5" stroke="#d8d8d8" stroke-width="1.2"/></svg>
<div class="a" style="left:933.5px;top:114px;width:1px;height:15px;background:#e4e4e4"></div>
<svg class="a" style="left:938px;top:115px" width="13" height="13" viewBox="0 0 13 13"><rect x="0.5" y="2.5" width="10.5" height="9.5" fill="#f6f9fc" stroke="#c4a868" stroke-width="0.9"/><rect x="1" y="3" width="9.5" height="2" fill="#5b8fcf"/><path d="M6 8l4.5 3.5" stroke="#e7c063"/><circle cx="10.2" cy="2.5" r="2.3" fill="#f2d060" stroke="#c6902a" stroke-width="0.6"/></svg>
<svg class="a" style="left:956px;top:115.5px" width="13" height="12" viewBox="0 0 13 12"><rect x="0.5" y="3" width="10" height="8.5" fill="#f6f9fc" stroke="#c4a868" stroke-width="0.9"/><rect x="1" y="3.5" width="9" height="2" fill="#5b8fcf"/><path d="M6.5 7L11 2.5" stroke="#777" stroke-width="1.3"/><circle cx="11" cy="2" r="1.7" fill="#9a9a9a"/></svg>
<svg class="a" style="left:977px;top:117px" width="10" height="6" viewBox="0 0 10 6"><path d="M0.8 0.6h8.4L5 5.4z" fill="#fff" stroke="#777" stroke-width="0.9"/></svg>
<div class="a" style="left:747px;top:129.8px;width:246.5px;height:1px;background:#e6e6e6"></div>
<div class="a" style="left:749px;top:133.21px;font-family:'Liberation Sans';font-size:9.2px;line-height:9.2px;color:#2b2b2b;white-space:pre;-webkit-text-stroke:0.1px #2b2b2b;">Name</div>
<div class="a" style="left:831px;top:133.21px;font-family:'Liberation Sans';font-size:9.2px;line-height:9.2px;color:#2b2b2b;white-space:pre;-webkit-text-stroke:0.1px #2b2b2b;">Type</div>
<div class="a" style="left:912px;top:133.21px;font-family:'Liberation Sans';font-size:9.2px;line-height:9.2px;color:#2b2b2b;white-space:pre;-webkit-text-stroke:0.1px #2b2b2b;">Value</div>
<div class="a" style="left:747px;top:143px;width:246.5px;height:1px;background:#e3e3e3"></div>
<div class="a" style="left:747px;top:157px;width:246.5px;height:13.5px;background:#f1f3f2"></div>
<div class="a" style="left:828.4px;top:131px;width:1px;height:48.5px;background:#dcdcdc"></div>
<div class="a" style="left:909.6px;top:131px;width:1px;height:48.5px;background:#dcdcdc"></div>
<div class="a" style="left:991.4px;top:131px;width:1px;height:48.5px;background:#dcdcdc"></div>
<div class="a" style="left:747px;top:180px;width:246.5px;height:3.2px;background:#e1e1e1"></div>
<div class="a" style="left:272.5px;top:210.5px;width:722.5px;height:20px;background:linear-gradient(#f1f1f1,#fdfdfd);border-radius:6px 6px 0 0"></div>
<div class="a" style="left:272.5px;top:210.5px;width:73px;height:20px;background:linear-gradient(#e5e8ed,#fcfcfd);border-radius:6px 6px 0 0;border:0.6px solid #d9dde3;border-bottom:none"></div>
<svg class="a" style="left:278px;top:214.5px" width="11" height="11" viewBox="0 0 11 11"><rect x="0.5" y="0.5" width="10" height="7.5" rx="1" fill="#3e79bf" stroke="#2a5796"/><rect x="1.8" y="1.8" width="7.4" height="5" fill="#dfe9f6"/><path d="M3 3.5h4M3 5h2.5" stroke="#4c6ea8" stroke-width="0.7"/><path d="M3 10h5" stroke="#2a5796" stroke-width="1.4"/></svg>
<div class="a" style="left:292.6px;top:218.01px;font-family:'Liberation Sans';font-size:9.2px;line-height:9.2px;color:#2b2b2b;white-space:pre;-webkit-text-stroke:0.1px #2b2b2b;">Console</div>
<svg class="a" style="left:332px;top:217.5px" width="9" height="9" viewBox="0 0 9 9"><path d="M1.5 1.5L7.5 7.5M7.5 1.5L1.5 7.5" stroke="#3c3c3c" stroke-width="3" stroke-linecap="round"/><path d="M1.5 1.5L7.5 7.5M7.5 1.5L1.5 7.5" stroke="#fafafa" stroke-width="1.3" stroke-linecap="round"/></svg>
<svg class="a" style="left:349.5px;top:214.5px" width="12" height="13" viewBox="0 0 12 13"><path d="M0.5 0.5h10l-1.5 5 1.5 6.5h-10z" fill="#e8eef6" stroke="#c8ccd8" stroke-width="0.7"/><circle cx="5" cy="4.3" r="2.4" fill="#e36a6a"/><path d="M2.5 11.5L5 7.6L7.5 11.5z" fill="#f2c060"/></svg>
<div class="a" style="left:365.6px;top:218.01px;font-family:'Liberation Sans';font-size:9.2px;line-height:9.2px;color:#8e8e8e;white-space:pre;-webkit-text-stroke:0.1px #8e8e8e;">Problems</div>
<svg class="a" style="left:413px;top:215px" width="11" height="11" viewBox="0 0 11 11"><circle cx="5.5" cy="5.5" r="5" fill="#b8c8de" stroke="#9ab0cc" stroke-width="0.7"/><path d="M4.2 3l3.6 2.5L4.2 8z" fill="#fff"/></svg>
<div class="a" style="left:428.5px;top:218.01px;font-family:'Liberation Sans';font-size:9.2px;line-height:9.2px;color:#8e8e8e;white-space:pre;-webkit-text-stroke:0.1px #8e8e8e;">Executables</div>
<div class="a" style="left:744.5px;top:216.5px;width:9.8px;height:9.8px;background:#e3232f;border-radius:1.5px;box-shadow:0 0 0 0.6px #c89aa0"></div>
<svg class="a" style="left:761px;top:215.5px" width="12" height="12" viewBox="0 0 12 12"><path d="M2 2L10 10M10 2L2 10" stroke="#d4d4d4" stroke-width="2.8" stroke-linecap="round"/></svg>
<svg class="a" style="left:778px;top:214.5px" width="13" height="13" viewBox="0 0 13 13"><path d="M2 3L9 10M9 3L2 10" stroke="#d4d4d4" stroke-width="2.4" stroke-linecap="round"/><path d="M5 1L12 8M12 1L5 8" stroke="#dcdcdc" stroke-width="1.6" stroke-linecap="round"/></svg>
<div class="a" style="left:795.5px;top:214px;width:1px;height:15px;background:#e0e0e0"></div>
<svg class="a" style="left:800.5px;top:214.5px" width="13" height="13" viewBox="0 0 13 13"><path d="M0.5 0.5h6l2.5 2.5v9H0.5z" fill="#f2f5fa" stroke="#8a9ab8" stroke-width="0.8"/><path d="M2 4h5M2 6h5M2 8h4" stroke="#8aa0c8" stroke-width="0.7"/><path d="M7.5 8.5l4.5 4M12 8.5l-4.5 4" stroke="#333" stroke-width="1.4"/></svg>
<div class="a" style="left:815.5px;top:213px;width:17.5px;height:17px;background:#dadada;border-radius:1px;box-shadow:0 0 0 0.5px #c4c4c4"></div>
<svg class="a" style="left:817.5px;top:215px" width="13" height="13" viewBox="0 0 13 13"><rect x="0.5" y="0.5" width="12" height="12" fill="#eef3f9" stroke="#8aa4c8" stroke-width="0.7"/><path d="M9 0.5v12" stroke="#8aa4c8" stroke-width="0.8"/><rect x="9.5" y="3" width="2.5" height="2.5" fill="#6a8ac0"/><rect x="2" y="7" width="5.5" height="4.5" fill="#e8b838" stroke="#a87818" stroke-width="0.5"/><path d="M3 7V5.2a1.75 1.75 0 0 1 3.5 0V7" fill="none" stroke="#808080" stroke-width="0.9"/></svg>
<svg class="a" style="left:836px;top:214.5px" width="13" height="13" viewBox="0 0 13 13"><path d="M0.5 0.5h7l2.5 2.5v9H0.5z" fill="#f4f6f8" stroke="#c8ccd4" stroke-width="0.8"/><path d="M2 4h6M2 6h6" stroke="#c8d0dc" stroke-width="0.7"/><path d="M6 9.5a3 2.5 0 0 0 6-1" fill="none" stroke="#f0d890" stroke-width="1.6"/></svg>
<div class="a" style="left:850px;top:213px;width:34.5px;height:17px;background:#dadada;border-radius:1px;box-shadow:0 0 0 0.5px #c4c4c4"></div>
<div class="a" style="left:867.5px;top:213px;width:0.6px;height:17px;background:#c4c4c4"></div>
<svg class="a" style="left:852px;top:214.5px" width="14" height="13" viewBox="0 0 14 13"><rect x="3" y="0.5" width="10.5" height="8" fill="#e6eef8" stroke="#4a7ac0" stroke-width="0.8"/><path d="M5 3h6M5 5h5" stroke="#6a8ac0" stroke-width="0.7"/><rect x="0.5" y="5" width="7" height="5.5" fill="#4a86c8" stroke="#2a5a98" stroke-width="0.6"/><path d="M2 12.5h4" stroke="#2a5a98" stroke-width="1.2"/></svg>
<svg class="a" style="left:869.5px;top:214.5px" width="14" height="13" viewBox="0 0 14 13"><rect x="3" y="0.5" width="10.5" height="8" fill="#e6eef8" stroke="#4a7ac0" stroke-width="0.8"/><path d="M8 2l3.5 3.5M11.5 2L8 5.5" stroke="#e03030" stroke-width="1.1"/><rect x="0.5" y="5" width="7" height="5.5" fill="#4a86c8" stroke="#2a5a98" stroke-width="0.6"/><path d="M2 12.5h4" stroke="#2a5a98" stroke-width="1.2"/></svg>
<div class="a" style="left:888px;top:214px;width:1px;height:15px;background:#e0e0e0"></div>
<svg class="a" style="left:892px;top:214.5px" width="13" height="13" viewBox="0 0 13 13"><rect x="0.5" y="3.5" width="11" height="8.5" fill="#f4f7fb" stroke="#c4a868"/><rect x="1" y="4" width="10" height="2" fill="#5b8fcf"/><path d="M7 7l4.5-5" stroke="#2f8a3a" stroke-width="1.8"/><circle cx="11" cy="2.2" r="2" fill="#3aa84a"/></svg>
<svg class="a" style="left:910px;top:215px" width="12" height="12" viewBox="0 0 12 12"><rect x="0.5" y="0.5" width="11" height="8.5" rx="1" fill="#3e79bf" stroke="#2a5796"/><rect x="2" y="2" width="8" height="5.5" fill="#dfe9f6"/><path d="M3 3.8h5M3 5.5h3" stroke="#4c6ea8" stroke-width="0.7"/><path d="M3.5 11h5" stroke="#2a5796" stroke-width="1.4"/></svg>
<svg class="a" style="left:925px;top:221px" width="5" height="3" viewBox="0 0 5 3"><path d="M0 0h5L2.5 3z" fill="#111"/></svg>
<svg class="a" style="left:934px;top:214.5px" width="13" height="13" viewBox="0 0 13 13"><rect x="0.5" y="2.5" width="11" height="9.5" fill="#f4f7fb" stroke="#c4a868"/><rect x="1" y="3" width="10" height="2" fill="#5b8fcf"/><path d="M6 8l5 3.5" stroke="#e7c063"/><circle cx="10" cy="2.5" r="2.2" fill="#f2d060" stroke="#c6902a" stroke-width="0.6"/></svg>
<svg class="a" style="left:949px;top:221px" width="5" height="3" viewBox="0 0 5 3"><path d="M0 0h5L2.5 3z" fill="#111"/></svg>
<div class="a" style="left:959.5px;top:216.5px;width:9px;height:3.5px;border:1px solid #8c8c8c;border-radius:1px;background:#f4f4f4"></div>
<div class="a" style="left:976.5px;top:216.5px;width:9px;height:8.5px;border:1px solid #8c8c8c;border-top:2px solid #8c8c8c;background:#fafafa"></div>
<div class="a" style="left:276.4px;top:234.41px;font-family:'Liberation Sans';font-size:9.2px;line-height:9.2px;color:#2b2b2b;white-space:pre;-webkit-text-stroke:0.1px #2b2b2b;">IldaPlayer Debug [GDB OpenOCD Debugging] openocd</div>
<div class="a" style="left:276px;top:244.5px;width:717px;height:1px;background:#e4e4e4"></div>
<div class="a" style="left:279.5px;top:245.3px;width:1.5px;height:1px;background:#e85858"></div>
<div class="a" style="left:295px;top:245.3px;width:1.5px;height:1px;background:#e85858"></div>
<div class="a" style="left:322.8px;top:245.3px;width:5.2px;height:1px;background:#e85858"></div>
<div class="a" style="left:333.7px;top:245.3px;width:5.8px;height:1px;background:#e85858"></div>
<div class="a" style="left:347.5px;top:245.3px;width:1px;height:1px;background:#e85858"></div>
<div class="a" style="left:376px;top:245.3px;width:1px;height:1px;background:#e85858"></div>
<div class="a" style="left:396.5px;top:245.3px;width:1.5px;height:1px;background:#e85858"></div>
<div class="a" style="left:416px;top:245.3px;width:1.2px;height:1px;background:#e85858"></div>
<div class="a" style="left:272.5px;top:246px;width:722px;height:361.5px;overflow:hidden">
<div class="a" style="left:-272.5px;top:-246px;width:1024px;height:664px">
<div class="a" style="left:276.6px;top:249.78px;font-family:'Liberation Mono';font-size:9.55px;line-height:9.55px;color:#111;white-space:pre;transform:scaleY(1.1);transform-origin:0 7.32px;-webkit-text-stroke:0.1px #111;">Hello ARM World!</div>
<div class="a" style="left:276.6px;top:260.89px;font-family:'Liberation Mono';font-size:9.55px;line-height:9.55px;color:#111;white-space:pre;transform:scaleY(1.1);transform-origin:0 7.32px;-webkit-text-stroke:0.1px #111;">System clock: 192000000 Hz</div>
<div class="a" style="left:276.6px;top:272.00px;font-family:'Liberation Mono';font-size:9.55px;line-height:9.55px;color:#111;white-space:pre;transform:scaleY(1.1);transform-origin:0 7.32px;-webkit-text-stroke:0.1px #111;">SD Driver linked</div>
<div class="a" style="left:276.6px;top:283.11px;font-family:'Liberation Mono';font-size:9.55px;line-height:9.55px;color:#111;white-space:pre;transform:scaleY(1.1);transform-origin:0 7.32px;-webkit-text-stroke:0.1px #111;">SD Mounted.</div>
<div class="a" style="left:276.6px;top:294.22px;font-family:'Liberation Mono';font-size:9.55px;line-height:9.55px;color:#111;white-space:pre;transform:scaleY(1.1);transform-origin:0 7.32px;-webkit-text-stroke:0.1px #111;">File 1: PORKSAX.ild</div>
<div class="a" style="left:276.6px;top:305.33px;font-family:'Liberation Mono';font-size:9.55px;line-height:9.55px;color:#111;white-space:pre;transform:scaleY(1.1);transform-origin:0 7.32px;-webkit-text-stroke:0.1px #111;">File 2: BULLDOG.ild</div>
<div class="a" style="left:276.6px;top:316.44px;font-family:'Liberation Mono';font-size:9.55px;line-height:9.55px;color:#111;white-space:pre;transform:scaleY(1.1);transform-origin:0 7.32px;-webkit-text-stroke:0.1px #111;">File 3: CanadaFlag.ild</div>
<div class="a" style="left:276.6px;top:327.55px;font-family:'Liberation Mono';font-size:9.55px;line-height:9.55px;color:#111;white-space:pre;transform:scaleY(1.1);transform-origin:0 7.32px;-webkit-text-stroke:0.1px #111;">File 4: 1DEV.ild</div>
<div class="a" style="left:276.6px;top:338.66px;font-family:'Liberation Mono';font-size:9.55px;line-height:9.55px;color:#111;white-space:pre;transform:scaleY(1.1);transform-origin:0 7.32px;-webkit-text-stroke:0.1px #111;">File 5: 2DEV.ild</div>
<div class="a" style="left:276.6px;top:349.77px;font-family:'Liberation Mono';font-size:9.55px;line-height:9.55px;color:#111;white-space:pre;transform:scaleY(1.1);transform-origin:0 7.32px;-webkit-text-stroke:0.1px #111;">File 6: 3DEV.ild</div>
<div class="a" style="left:276.6px;top:360.88px;font-family:'Liberation Mono';font-size:9.55px;line-height:9.55px;color:#111;white-space:pre;transform:scaleY(1.1);transform-origin:0 7.32px;-webkit-text-stroke:0.1px #111;">File 7: 4DEV.ild</div>
<div class="a" style="left:276.6px;top:371.99px;font-family:'Liberation Mono';font-size:9.55px;line-height:9.55px;color:#111;white-space:pre;transform:scaleY(1.1);transform-origin:0 7.32px;-webkit-text-stroke:0.1px #111;">File 8: 5DEV.ild</div>
<div class="a" style="left:276.6px;top:383.10px;font-family:'Liberation Mono';font-size:9.55px;line-height:9.55px;color:#111;white-space:pre;transform:scaleY(1.1);transform-origin:0 7.32px;-webkit-text-stroke:0.1px #111;">File 9: 6DEV.ild</div>
<div class="a" style="left:276.6px;top:394.21px;font-family:'Liberation Mono';font-size:9.55px;line-height:9.55px;color:#111;white-space:pre;transform:scaleY(1.1);transform-origin:0 7.32px;-webkit-text-stroke:0.1px #111;">File 10: 7DEV.ild</div>
<div class="a" style="left:276.6px;top:405.32px;font-family:'Liberation Mono';font-size:9.55px;line-height:9.55px;color:#111;white-space:pre;transform:scaleY(1.1);transform-origin:0 7.32px;-webkit-text-stroke:0.1px #111;">File 11: 8DEV.ild</div>
<div class="a" style="left:276.6px;top:416.43px;font-family:'Liberation Mono';font-size:9.55px;line-height:9.55px;color:#111;white-space:pre;transform:scaleY(1.1);transform-origin:0 7.32px;-webkit-text-stroke:0.1px #111;">File 12: 9DEV.ild</div>
<div class="a" style="left:276.6px;top:427.54px;font-family:'Liberation Mono';font-size:9.55px;line-height:9.55px;color:#111;white-space:pre;transform:scaleY(1.1);transform-origin:0 7.32px;-webkit-text-stroke:0.1px #111;">File 13: 10DEV.ild</div>
<div class="a" style="left:276.6px;top:438.65px;font-family:'Liberation Mono';font-size:9.55px;line-height:9.55px;color:#111;white-space:pre;transform:scaleY(1.1);transform-origin:0 7.32px;-webkit-text-stroke:0.1px #111;">File 14: 11DEV.ild</div>
<div class="a" style="left:276.6px;top:449.76px;font-family:'Liberation Mono';font-size:9.55px;line-height:9.55px;color:#111;white-space:pre;transform:scaleY(1.1);transform-origin:0 7.32px;-webkit-text-stroke:0.1px #111;">File 15: 12DEV.ild</div>
<div class="a" style="left:276.6px;top:460.87px;font-family:'Liberation Mono';font-size:9.55px;line-height:9.55px;color:#111;white-space:pre;transform:scaleY(1.1);transform-origin:0 7.32px;-webkit-text-stroke:0.1px #111;">File 16: 13DEV.ild</div>
<div class="a" style="left:276.6px;top:471.98px;font-family:'Liberation Mono';font-size:9.55px;line-height:9.55px;color:#111;white-space:pre;transform:scaleY(1.1);transform-origin:0 7.32px;-webkit-text-stroke:0.1px #111;">File 17: BEAT1.ild</div>
<div class="a" style="left:276.6px;top:483.09px;font-family:'Liberation Mono';font-size:9.55px;line-height:9.55px;color:#111;white-space:pre;transform:scaleY(1.1);transform-origin:0 7.32px;-webkit-text-stroke:0.1px #111;">File 18: BEAT2.ild</div>
<div class="a" style="left:276.6px;top:494.20px;font-family:'Liberation Mono';font-size:9.55px;line-height:9.55px;color:#111;white-space:pre;transform:scaleY(1.1);transform-origin:0 7.32px;-webkit-text-stroke:0.1px #111;">File 19: BEAT3.ild</div>
<div class="a" style="left:276.6px;top:505.31px;font-family:'Liberation Mono';font-size:9.55px;line-height:9.55px;color:#111;white-space:pre;transform:scaleY(1.1);transform-origin:0 7.32px;-webkit-text-stroke:0.1px #111;">File 20: BEAT4.ild</div>
<div class="a" style="left:276.6px;top:516.42px;font-family:'Liberation Mono';font-size:9.55px;line-height:9.55px;color:#111;white-space:pre;transform:scaleY(1.1);transform-origin:0 7.32px;-webkit-text-stroke:0.1px #111;">File 21: BFR1.ild</div>
<div class="a" style="left:276.6px;top:527.53px;font-family:'Liberation Mono';font-size:9.55px;line-height:9.55px;color:#111;white-space:pre;transform:scaleY(1.1);transform-origin:0 7.32px;-webkit-text-stroke:0.1px #111;">File 22: BFR2.ild</div>
<div class="a" style="left:276.6px;top:538.64px;font-family:'Liberation Mono';font-size:9.55px;line-height:9.55px;color:#111;white-space:pre;transform:scaleY(1.1);transform-origin:0 7.32px;-webkit-text-stroke:0.1px #111;">File 23: BFR3.ild</div>
<div class="a" style="left:276.6px;top:549.75px;font-family:'Liberation Mono';font-size:9.55px;line-height:9.55px;color:#111;white-space:pre;transform:scaleY(1.1);transform-origin:0 7.32px;-webkit-text-stroke:0.1px #111;">File 24: BOW.ild</div>
<div class="a" style="left:276.6px;top:560.86px;font-family:'Liberation Mono';font-size:9.55px;line-height:9.55px;color:#111;white-space:pre;transform:scaleY(1.1);transform-origin:0 7.32px;-webkit-text-stroke:0.1px #111;">File 25: BUGGY1.ild</div>
<div class="a" style="left:276.6px;top:571.97px;font-family:'Liberation Mono';font-size:9.55px;line-height:9.55px;color:#111;white-space:pre;transform:scaleY(1.1);transform-origin:0 7.32px;-webkit-text-stroke:0.1px #111;">File 26: BUGGY2.ild</div>
<div class="a" style="left:276.6px;top:583.08px;font-family:'Liberation Mono';font-size:9.55px;line-height:9.55px;color:#111;white-space:pre;transform:scaleY(1.1);transform-origin:0 7.32px;-webkit-text-stroke:0.1px #111;">File 27: CAN-.ild</div>
<div class="a" style="left:276.6px;top:594.19px;font-family:'Liberation Mono';font-size:9.55px;line-height:9.55px;color:#111;white-space:pre;transform:scaleY(1.1);transform-origin:0 7.32px;-webkit-text-stroke:0.1px #111;">File 28: CASE.ild</div>
<div class="a" style="left:276.6px;top:605.30px;font-family:'Liberation Mono';font-size:9.55px;line-height:9.55px;color:#111;white-space:pre;transform:scaleY(1.1);transform-origin:0 7.32px;-webkit-text-stroke:0.1px #111;">File 29: CAUSE_CA.ild</div>
</div></div>
<div class="a" style="left:534.8px;top:612px;width:1px;height:13px;background:#cfcfcf"></div>
<div class="a" style="left:617.7px;top:612px;width:1px;height:13px;background:#cfcfcf"></div>
<div class="a" style="left:695.6px;top:612px;width:1px;height:13px;background:#cfcfcf"></div>
<div class="a" style="left:771.5px;top:613px;width:1px;height:13px;background:repeating-linear-gradient(#a8a8a8 0 1px,transparent 1px 3.5px)"></div>
<div class="a" style="left:540.8px;top:614.51px;font-family:'Liberation Sans';font-size:9.2px;line-height:9.2px;color:#2b2b2b;white-space:pre;-webkit-text-stroke:0.1px #2b2b2b;">Writable</div>
<div class="a" style="left:622.6px;top:614.51px;font-family:'Liberation Sans';font-size:9.2px;line-height:9.2px;color:#2b2b2b;white-space:pre;-webkit-text-stroke:0.1px #2b2b2b;">Smart Insert</div>
<div class="a" style="left:700.5px;top:614.51px;font-family:'Liberation Sans';font-size:9.2px;line-height:9.2px;color:#2b2b2b;white-space:pre;-webkit-text-stroke:0.1px #2b2b2b;letter-spacing:0.3px;">43 : 1 : 1091</div>
<svg class="a" style="left:974px;top:612.5px" width="14" height="14" viewBox="0 0 14 14"><rect x="0.5" y="1" width="9" height="6" fill="#a8c8a0" stroke="#7a9a78" stroke-width="0.6"/><rect x="2" y="3" width="9" height="6" fill="#b8d4b0" stroke="#7a9a78" stroke-width="0.6"/><circle cx="10" cy="10" r="3.3" fill="#e04040"/><path d="M8.6 8.6l2.8 2.8M11.4 8.6l-2.8 2.8" stroke="#fff" stroke-width="0.9"/></svg>
</div></body></html>
